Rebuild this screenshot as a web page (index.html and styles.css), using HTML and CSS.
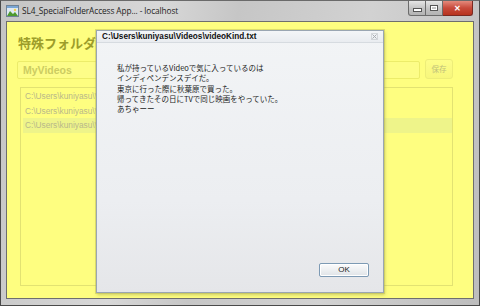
FILE: index.html
```html
<!DOCTYPE html>
<html lang="ja">
<head>
    <meta charset="UTF-8">
    <title>SL4_SpecialFolderAccess</title>
    <link rel="stylesheet" href="styles.css">
</head>
<body>
    <div class="window">
        <!-- barra de título -->
        <div class="titlebar">
            <svg class="app-icon" width="13" height="12" viewBox="0 0 13 12">
                <rect x="0.5" y="0.5" width="12" height="11" fill="#dfe9f2" stroke="#6f8296"/>
                <rect x="1" y="1" width="11" height="2" fill="#7aa6d4"/>
                <path d="M1 11 L4 6 L7 9 L9 7 L12 11 Z" fill="#4e9a2e"/>
                <circle cx="9" cy="5" r="1.2" fill="#f2d04b"/>
            </svg>
            <span class="title">SL4_SpecialFolderAccess App... - localhost</span>
            <div class="caption-buttons">
                <div class="cbtn cbtn-min"><span class="min-bar"></span></div>
                <div class="cbtn cbtn-max"><span class="max-box"></span></div>
                <div class="cbtn cbtn-close">&#x2715;</div>
            </div>
        </div>
        <div class="client">
            <h1 class="heading">特殊フォルダアクセス</h1>
            <div class="path-row">
                <div class="textbox">MyVideos</div>
                <div class="save-btn">保存</div>
            </div>
            <div class="listbox">
                <div class="item">C:\Users\kuniyasu\Videos\videoKind.txt</div>
                <div class="item">C:\Users\kuniyasu\Videos\desktop.ini</div>
                <div class="item selected">C:\Users\kuniyasu\Videos\videoKind.txt</div>
            </div>

            <!-- ventana hija -->
            <div class="child-window">
                <div class="child-title">
                    <span>C:\Users\kuniyasu\Videos\videoKind.txt</span>
                    <svg class="child-close" width="7" height="7" viewBox="0 0 7 7">
                        <rect x="0.5" y="0.5" width="6" height="6" fill="none" stroke="#b9bcc0" stroke-dasharray="1 1"/>
                        <path d="M1.5 1.5 L5.5 5.5 M5.5 1.5 L1.5 5.5" stroke="#a9adb2" stroke-width="1"/>
                    </svg>
                </div>
                <div class="child-body">
                    <p class="message">私が持っているVideoで気に入っているのは<br>インディペンデンスデイだ。<br>東京に行った際に秋葉原で買った。<br>帰ってきたその日にTVで同じ映画をやっていた。<br>あちゃーー</p>
                    <div class="ok-row">
                        <div class="ok-btn">OK</div>
                    </div>
                </div>
            </div>
        </div>
    </div>
</body>
</html>
```

FILE: styles.css
```css
body {
    margin: 0;
    background: #3a3a3a;
    font-family: "Liberation Sans", Arial, "Noto Sans CJK JP", sans-serif;
}

.window {
    width: 480px;
    height: 306px;
    box-sizing: border-box;
    display: flex;
    flex-direction: column;
    background: linear-gradient(100deg, #c4c4c4 0%, #d8d8d8 30%, #c6c6c6 45%, #d2d2d2 70%, #bdbdbd 100%);
    border: 1px solid #4a4a4a;
    border-top-color: #6a6a6a;
}

.titlebar {
    height: 19px;
    display: flex;
    align-items: center;
    position: relative;
    padding-left: 5px;
}

.app-icon {
    margin-right: 3px;
}

.title {
    font-family: "Open Sans", "Liberation Sans", sans-serif;
    font-size: 8.3px;
    color: #1e1e1e;
    letter-spacing: -0.1px;
}

.caption-buttons {
    position: absolute;
    top: 0;
    right: 6px;
    display: flex;
}

.cbtn {
    height: 15px;
    box-sizing: border-box;
    border: 1px solid #6c6c6c;
    border-top: none;
    display: flex;
    align-items: center;
    justify-content: center;
}

.cbtn-min {
    width: 18px;
    border-radius: 0 0 0 3px;
    background: linear-gradient(#e6e6e6, #c2c2c2 55%, #b3b3b3);
}

.cbtn-max {
    width: 17px;
    border-left: none;
    background: linear-gradient(#e6e6e6, #c2c2c2 55%, #b3b3b3);
}

.cbtn-close {
    width: 30px;
    border-left: none;
    border-radius: 0 0 3px 0;
    border-color: #7a2a22;
    background: linear-gradient(#e48a7c, #c84a3b 50%, #b7341f);
    color: #ffffff;
    font-size: 8px;
    font-weight: bold;
}

.min-bar {
    width: 7px;
    height: 2px;
    margin-top: 4px;
    background: #ffffff;
    border: 1px solid #555;
}

.max-box {
    width: 6px;
    height: 4px;
    border: 1px solid #555;
    box-shadow: inset 0 0 0 1px #ffffff;
}

.client {
    flex: 1;
    position: relative;
    margin: 1px 5px 6px 5px;
    border: 1px solid #6e6e6e;
    background: #fefe80;
    padding: 13px 20px 12px 10px;
    display: flex;
    flex-direction: column;
}

.heading {
    margin: 0 0 8px 1px;
    font-size: 13px;
    line-height: 16px;
    font-family: "Noto Sans CJK JP", sans-serif;
    font-weight: bold;
    color: #9d9d2a;
}

.path-row {
    display: flex;
    align-items: flex-end;
    gap: 5px;
}

.textbox {
    flex: 1;
    height: 18px;
    box-sizing: border-box;
    border: 1px solid #ecec6a;
    border-radius: 2px;
    background: #fdfd88;
    padding-left: 5px;
    font-size: 10.5px;
    font-weight: bold;
    line-height: 16px;
    color: #cccc62;
}

.save-btn {
    width: 28px;
    height: 20px;
    box-sizing: border-box;
    border: 1px solid #eded78;
    border-radius: 3px;
    background: linear-gradient(#fdfd8a, #f7f77c);
    font-family: "Noto Sans CJK JP", sans-serif;
    font-size: 7.5px;
    line-height: 18px;
    text-align: center;
    color: #c0c07a;
}

.listbox {
    flex: 1;
    margin: 8px 0 0 3px;
    border: 1px solid #e2e272;
    padding: 1px 0 0 2px;
}

.item {
    height: 14.5px;
    line-height: 14.5px;
    padding-left: 2px;
    font-size: 8.3px;
    color: #b8b88a;
    white-space: nowrap;
    overflow: hidden;
}

.item.selected {
    background: #eef48a;
}

.child-window {
    position: absolute;
    left: 89px;
    top: 8px;
    width: 288px;
    height: 263px;
    box-sizing: border-box;
    border: 1px solid #9aa6b2;
    box-shadow: 0 0 0 1px rgba(190, 190, 90, 0.5), 1px 2px 3px rgba(120, 120, 60, 0.35);
    background: linear-gradient(#f2f4f6, #eceef1 65%, #e5e6e9);
    display: flex;
    flex-direction: column;
}

.child-title {
    height: 12px;
    box-sizing: border-box;
    border-bottom: 1px solid #d6dbe0;
    background: linear-gradient(#f4f6f8, #e9ecf0);
    display: flex;
    align-items: center;
    justify-content: space-between;
    padding: 0 5px 0 5px;
    font-size: 8.2px;
    font-weight: bold;
    color: #111111;
}

.child-body {
    flex: 1;
    display: flex;
    flex-direction: column;
    padding: 20px 14px 15px 20px;
}

.message {
    flex: 1;
    margin: 0;
    font-family: "Noto Sans CJK JP", sans-serif;
    font-size: 7.5px;
    line-height: 10.3px;
    color: #222222;
}

.ok-row {
    display: flex;
    justify-content: flex-end;
}

.ok-btn {
    width: 50px;
    height: 14px;
    box-sizing: border-box;
    border: 1px solid #7d9ab4;
    border-radius: 2px;
    background: linear-gradient(#fbfbfc, #eef0f2 50%, #dfe3e7);
    box-shadow: inset 0 0 0 1px #ffffff;
    font-size: 8px;
    line-height: 12px;
    text-align: center;
    color: #222222;
}
```
